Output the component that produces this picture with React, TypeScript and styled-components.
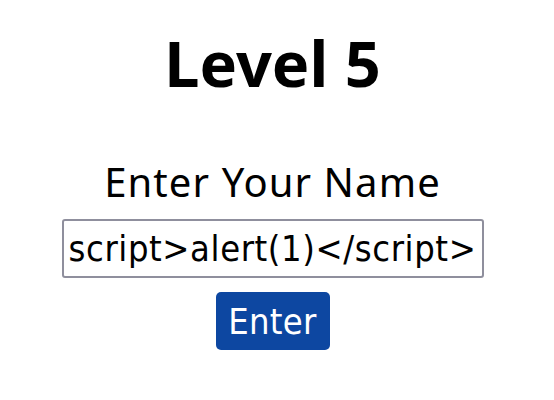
import React from "react";
import styled, { createGlobalStyle } from "styled-components";

const GlobalStyle = createGlobalStyle`
  html, body {
    margin: 0;
    padding: 0;
    background: #ffffff;
  }
  body {
    font-family: "Noto Sans", "Open Sans", sans-serif;
    color: #000000;
  }
`;

const Page = styled.main`
  display: flex;
  flex-direction: column;
  align-items: center;
  width: 545px;
  padding-top: 20px;
`;

const Title = styled.h1`
  margin: 0;
  font-family: "Noto Sans", "Open Sans", sans-serif;
  font-weight: 700;
  font-size: 63px;
  line-height: 86px;
`;

const Form = styled.form`
  display: flex;
  flex-direction: column;
  align-items: center;
  margin-top: 50px;
`;

const Label = styled.label`
  font-family: "Noto Sans", "Open Sans", sans-serif;
  font-size: 40px;
  letter-spacing: 1.1px;
  line-height: 52px;
`;

const NameInput = styled.input`
  box-sizing: border-box;
  width: 422px;
  height: 59px;
  margin-top: 11px;
  padding: 0 5px;
  border: 2px solid #8f8f9d;
  border-radius: 3px;
  background: #ffffff;
  font-family: "DejaVu Sans Condensed", "DejaVu Sans", sans-serif;
  font-size: 36px;
  letter-spacing: 0.6px;
  color: #000000;
  outline: none;
`;

const SubmitButton = styled.button`
  box-sizing: border-box;
  width: 114px;
  height: 58px;
  margin-top: 14px;
  padding: 0;
  border: none;
  border-radius: 5px;
  background: #0d47a1;
  color: #ffffff;
  font-family: "DejaVu Sans Condensed", "DejaVu Sans", sans-serif;
  font-size: 36px;
  letter-spacing: 0.3px;
  cursor: pointer;
`;

export default function App() {
  return (
    <>
      <GlobalStyle />
      <Page>
        <Title>Level 5</Title>
        <Form onSubmit={(e) => e.preventDefault()}>
          <Label htmlFor="name">Enter Your Name</Label>
          <NameInput id="name" defaultValue="script>alert(1)</script>" />
          <SubmitButton type="submit">Enter</SubmitButton>
        </Form>
      </Page>
    </>
  );
}
